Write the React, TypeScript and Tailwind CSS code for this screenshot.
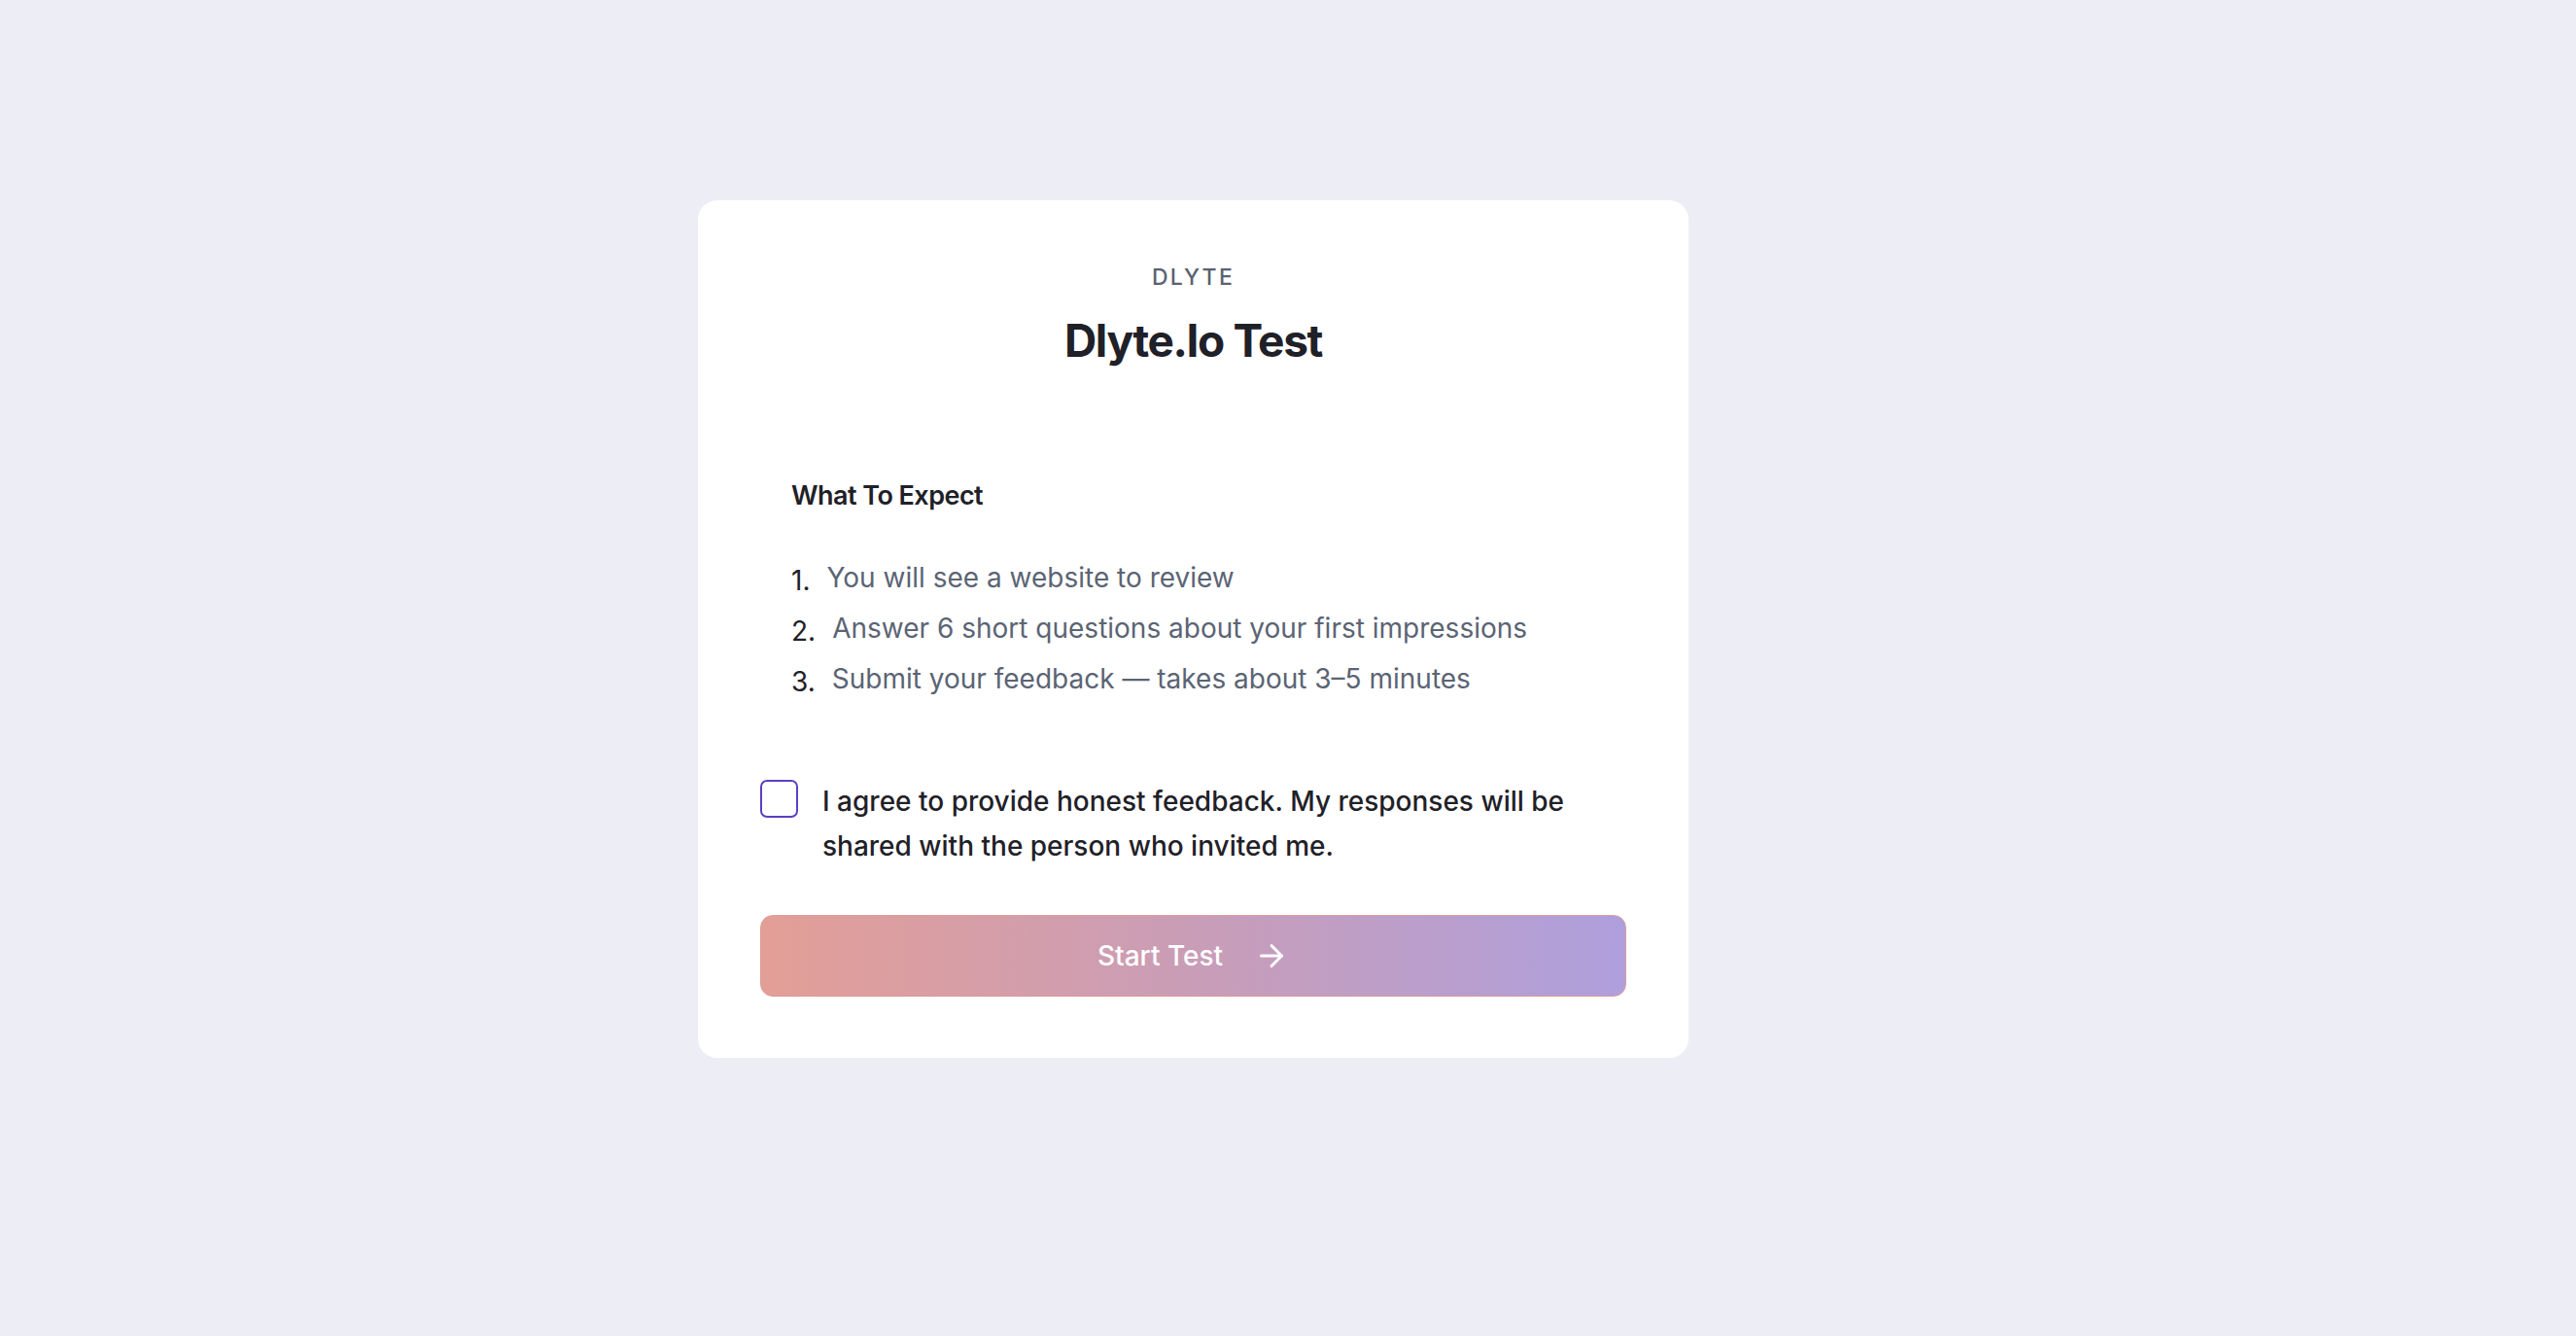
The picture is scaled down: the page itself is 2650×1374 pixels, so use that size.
import React from "react";

function ArrowRight() {
  return (
    <svg width="36" height="36" viewBox="0 0 24 24" fill="none" stroke="white" strokeWidth="2" strokeLinecap="round" strokeLinejoin="round">
      <path d="M5 12h14" />
      <path d="m12 5 7 7-7 7" />
    </svg>
  );
}

export default function App() {
  const items = [
    "You will see a website to review",
    "Answer 6 short questions about your first impressions",
    "Submit your feedback — takes about 3–5 minutes",
  ];
  return (
    <div className="min-h-screen w-full bg-[#edeef5] pl-[718px] pt-[206px] font-['Inter',sans-serif]">
      <div className="flex w-[1019px] flex-col rounded-[20px] bg-white px-[64px] pt-[64px] pb-[63px]">
        <div className="text-center text-[23px] leading-[30px] font-medium tracking-[0.1em] text-[#5a6272]">
          DLYTE
        </div>
        <h1 className="mt-[22px] text-center text-[46px] leading-[56px] font-bold tracking-[-0.03em] text-[#1f2028]">
          Dlyte.Io Test
        </h1>
        <div className="mt-[114px] px-[32px]">
          <h2 className="text-[27px] leading-[36px] font-semibold tracking-[-0.02em] text-[#1f2128]">What To Expect</h2>
          <ol className="mt-[46px] flex flex-col gap-[12px]">
            {items.map((t, i) => (
              <li key={i} className="flex items-start gap-[17px] text-[28px] leading-[40px]">
                <span className="translate-y-[3px] text-[#1f2128]">{i + 1}.</span>
                <span className="text-[#5b6474]">{t}</span>
              </li>
            ))}
          </ol>
        </div>
        <label className="mt-[83px] flex items-start gap-[25px]">
          <span className="mt-[1px] h-[39px] w-[39px] shrink-0 rounded-[7px] border-[2.5px] border-[#5b40c4] bg-white" />
          <span className="text-[28px] leading-[46px] font-medium text-[#1f2128]">
            I agree to provide honest feedback. My responses will be shared with the person who invited me.
          </span>
        </label>
        <button className="mt-[48px] flex h-[84px] w-full items-center justify-center gap-[32px] rounded-[13px] border border-[#dc9c9a] bg-gradient-to-r from-[#e39e96] via-[#c99db7] to-[#ae9fdd] text-[28px] font-medium text-white">
          <span>Start Test</span>
          <ArrowRight />
        </button>
      </div>
    </div>
  );
}
